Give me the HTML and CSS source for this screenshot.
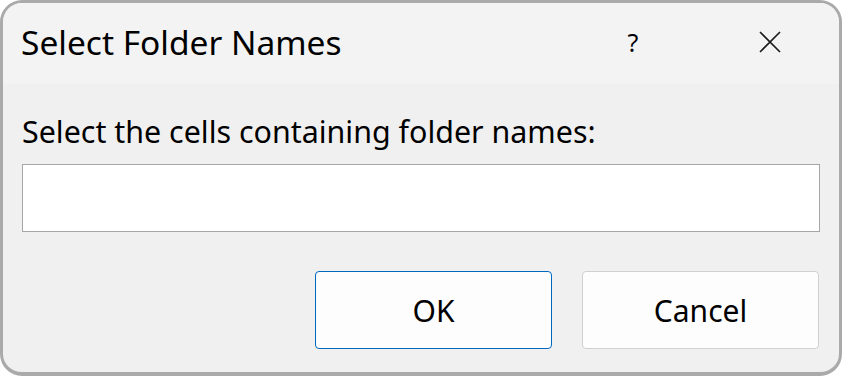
FILE: index.html
```html
<!DOCTYPE html>
<html>
<head>
<meta charset="utf-8">
<link rel="stylesheet" href="styles.css">
</head>
<body>
<div class="window">
  <div class="titlebar">
    <div class="title">Select Folder Names</div>
    <div class="help">?</div>
    <div class="close">
      <svg width="22" height="22" viewBox="0 0 22 22"><path d="M1 1 L21 21 M21 1 L1 21" stroke="#1a1a1a" stroke-width="1.6" fill="none"/></svg>
    </div>
  </div>
  <div class="content">
    <div class="label">Select the cells containing folder names:</div>
    <div class="input"></div>
    <div class="buttons">
      <div class="btn btn-default">OK</div>
      <div class="btn">Cancel</div>
    </div>
  </div>
</div>
</body>
</html>
```

FILE: styles.css
```css
html, body {
  margin: 0;
  padding: 0;
  background: #ffffff;
}
body {
  width: 842px;
  height: 376px;
  font-family: "Noto Sans", "Open Sans", sans-serif;
  color: #000;
}
.window {
  box-sizing: border-box;
  width: 842px;
  height: 376px;
  border: 3px solid #aaaaaa;
  border-bottom-width: 4px;
  border-radius: 22px;
  background: #f0f0f0;
  overflow: hidden;
  display: flex;
  flex-direction: column;
}
.titlebar {
  height: 81px;
  background: #f3f3f3;
  display: flex;
  align-items: center;
  padding-left: 18px;
  box-sizing: border-box;
  padding-bottom: 4px;
}
.title {
  font-size: 33.5px;
  flex: 1;
}
.help {
  font-size: 25px;
  width: 24px;
  margin-right: 114px;
  text-align: center;
}
.close {
  width: 22px;
  height: 22px;
  margin-right: 58px;
  display: flex;
}
.content {
  flex: 1;
  padding: 28px 19px 0 19px;
  display: flex;
  flex-direction: column;
}
.label {
  font-size: 30.4px;
  line-height: 40px;
}
.input {
  margin-top: 12px;
  height: 66px;
  background: #ffffff;
  border: 1px solid #a6a6a6;
}
.buttons {
  margin-top: 39px;
  padding-right: 1px;
  display: flex;
  justify-content: flex-end;
  gap: 30px;
}
.btn {
  box-sizing: border-box;
  width: 237px;
  height: 78px;
  border: 1px solid #d0d0d0;
  border-radius: 4px;
  background: #fdfdfd;
  font-size: 30px;
  display: flex;
  align-items: center;
  justify-content: center;
}
.btn-default {
  border-color: #0067c0;
}
```
